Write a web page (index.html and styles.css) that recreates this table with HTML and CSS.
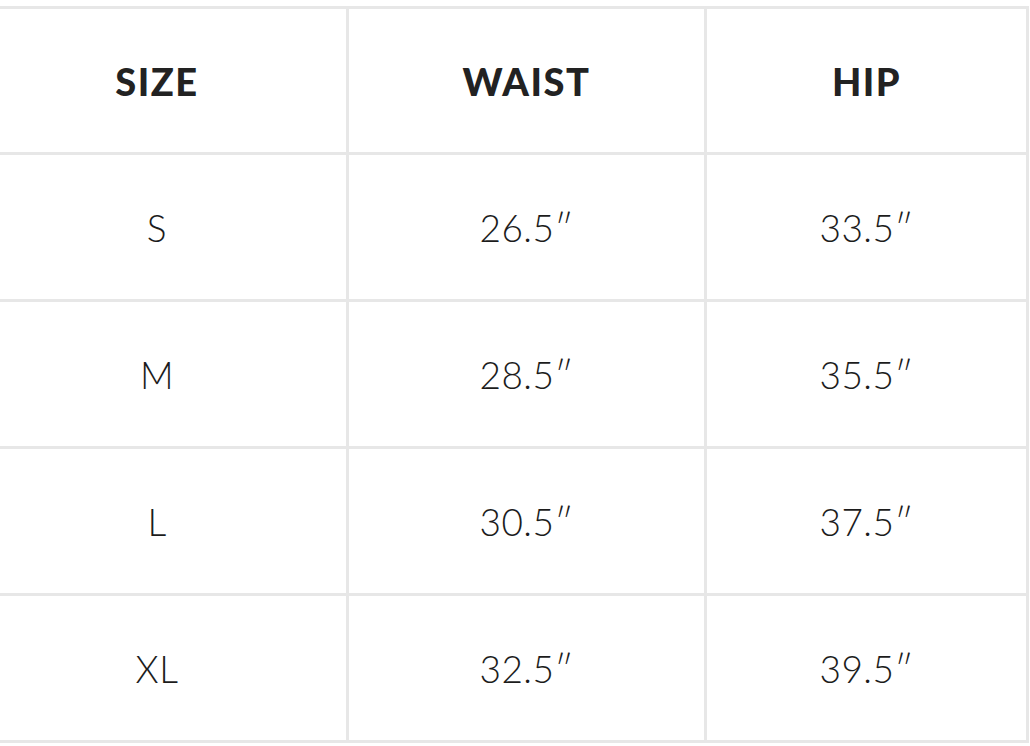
FILE: index.html
```html
<!DOCTYPE html>
<html>
<head>
<meta charset="utf-8">
<link rel="stylesheet" href="styles.css">
</head>
<body>
<div class="chart">
  <div class="cell head">SIZE</div>
  <div class="cell head">WAIST</div>
  <div class="cell head">HIP</div>
  <div class="cell">S</div>
  <div class="cell">26.5″</div>
  <div class="cell">33.5″</div>
  <div class="cell">M</div>
  <div class="cell">28.5″</div>
  <div class="cell">35.5″</div>
  <div class="cell">L</div>
  <div class="cell">30.5″</div>
  <div class="cell">37.5″</div>
  <div class="cell">XL</div>
  <div class="cell">32.5″</div>
  <div class="cell">39.5″</div>
</div>
</body>
</html>
```
FILE: styles.css
```css
html, body {
  margin: 0;
  padding: 0;
  background: #ffffff;
  overflow: hidden;
}
body {
  width: 1030px;
  height: 746px;
}
.chart {
  display: grid;
  grid-template-columns: 378px 355px 319px;
  grid-template-rows: 143px repeat(4, 144px);
  gap: 3px;
  padding: 3px;
  background: #e7e7e7;
  margin: 6px 0 0 -35px;
  width: max-content;
}
.cell {
  background: #ffffff;
  display: flex;
  align-items: center;
  justify-content: center;
  font-family: "Lato", "Open Sans", sans-serif;
  font-size: 37px;
  color: #1c1c1c;
  font-weight: 300;
  letter-spacing: 0.5px;
}
.cell.head {
  font-weight: 900;
  font-size: 38px;
  letter-spacing: 1.5px;
  color: #222222;
}
```
